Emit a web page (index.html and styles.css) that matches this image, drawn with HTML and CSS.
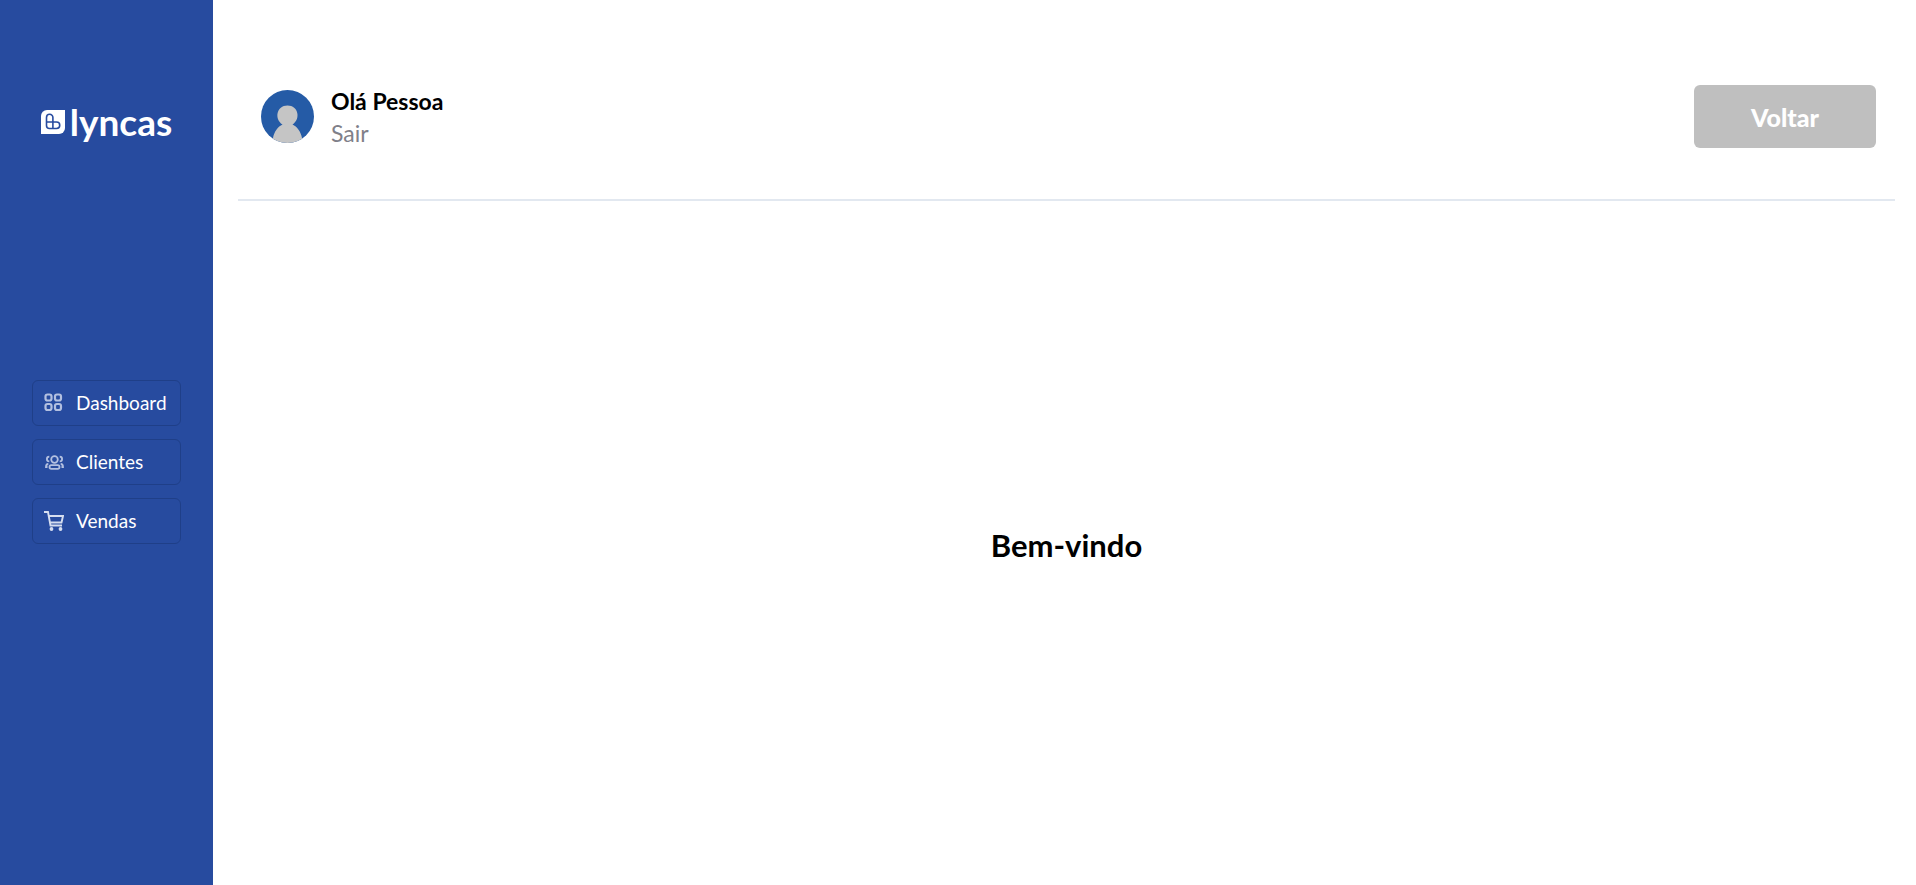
FILE: index.html
```html
<!DOCTYPE html>
<html lang="pt-BR">
<head>
<meta charset="utf-8">
<meta name="viewport" content="width=device-width, initial-scale=1">
<title>Lyncas</title>
<link rel="stylesheet" href="styles.css">
</head>
<body>
<div class="app">
  <aside class="sidebar">
    <div class="logo">
      <svg class="logo-mark" viewBox="0 0 24 24" aria-hidden="true">
        <path fill="#fff" d="M6 0H24V18a6 6 0 0 1-6 6H0V6a6 6 0 0 1 6-6Z"/>
        <path fill="none" stroke="#274b9f" stroke-width="1.600" d="M5.500 12V7.500a3.200 3.200 0 0 1 6.400 0V18.500H8.500a3 3 0 0 1-3-3V12H15.500a3.200 3.200 0 0 1 0 6.500H11.500"/>
      </svg>
      <span class="logo-name">lyncas</span>
    </div>
    <nav class="menu">
      <a class="menu-item" href="#dashboard">
        <svg class="menu-icon" viewBox="0 0 20 20" aria-hidden="true" fill="none" stroke="#b3c0e0" stroke-width="2.200">
          <rect x="1.500" y="1.500" width="6" height="6" rx="2"/><rect x="11" y="1.500" width="6" height="6" rx="2"/>
          <rect x="1.500" y="11" width="6" height="6" rx="2"/><rect x="11" y="11" width="6" height="6" rx="2"/>
        </svg>
        <span>Dashboard</span>
      </a>
      <a class="menu-item" href="#clientes">
        <svg class="menu-icon" viewBox="0 0 20 20" aria-hidden="true" fill="none" stroke="#b3c0e0" stroke-width="1.800">
          <circle cx="10.500" cy="7.500" r="3.300"/>
          <rect x="5.500" y="13.200" width="10" height="3.600" rx="1.800"/>
          <path d="M5.300 4.600a2.300 2.300 0 0 0 0 4.800M15.700 4.600a2.300 2.300 0 0 1 0 4.800M4.300 12C2.800 12 2 13 2 15H3.500M16.700 12C18.200 12 19 13 19 15H17.500"/>
        </svg>
        <span>Clientes</span>
      </a>
      <a class="menu-item" href="#vendas">
        <svg class="menu-icon" viewBox="0 0 20 20" aria-hidden="true" fill="none" stroke="#d6def0" stroke-width="1.900">
          <path d="M0 1H4L6.500 14.500H18M5 5H19L17.500 11.500H6.500"/>
          <circle cx="7.500" cy="18" r="1.900" fill="#d6def0" stroke="none"/><circle cx="16.500" cy="18" r="1.900" fill="#d6def0" stroke="none"/>
        </svg>
        <span>Vendas</span>
      </a>
    </nav>
  </aside>
  <div class="page">
    <header class="topbar">
      <div class="user">
        <svg class="avatar" viewBox="0 0 53 53" aria-hidden="true">
          <defs><clipPath id="avatar-clip"><circle cx="26.500" cy="26.500" r="26.500"/></clipPath></defs>
          <g clip-path="url(#avatar-clip)">
            <rect width="53" height="53" fill="#255ba6"/>
            <path fill="#c5c5c5" d="M12 53V48C13 42 17 36.500 21.500 34.500C13 29 15.500 15.500 26.500 15.500S40 29 31.500 34.500C36 36.500 40 42 41 48V53Z"/>
          </g>
        </svg>
        <div class="user-text">
          <strong class="user-name">Olá Pessoa</strong>
          <a class="logout" href="#sair">Sair</a>
        </div>
      </div>
      <button class="back" type="button">Voltar</button>
    </header>
    <main class="content">
      <h1 class="welcome">Bem-vindo</h1>
    </main>
  </div>
</div>
</body>
</html>
```
FILE: styles.css
```css
* {
  box-sizing: border-box;
}

body {
  margin: 0;
  font-family: Lato, "Open Sans", sans-serif;
  color: #000;
  background: #fff;
}

a {
  text-decoration: none;
}

.app {
  display: flex;
  min-height: 100vh;
}

.sidebar {
  flex: 0 0 213px;
  padding: 100px 32px 32px;
  background: #274b9f;
}

.logo {
  display: flex;
  align-items: center;
  justify-content: center;
  gap: 5px;
  height: 44px;
  color: #fff;
}

.logo-mark {
  flex: none;
  width: 24px;
  height: 24px;
}

.logo-name {
  font-size: 37px;
  font-weight: 700;
  line-height: 42px;
}

.menu {
  display: grid;
  gap: 13px;
  margin-top: 236px;
}

.menu-item {
  display: flex;
  align-items: center;
  gap: 12px;
  height: 46px;
  padding: 0 11px;
  border: 1px solid #1f3f88;
  border-radius: 6px;
  color: #fff;
  font-size: 19px;
  line-height: 24px;
}

.menu-icon {
  flex: none;
  width: 20px;
  height: 20px;
}

.page {
  flex: 1;
  display: flex;
  flex-direction: column;
  padding: 0 21px 0 25px;
}

.topbar {
  display: flex;
  align-items: flex-start;
  justify-content: space-between;
  padding: 85px 19px 51px 23px;
  border-bottom: 2px solid #e2e8f0;
}

.user {
  display: flex;
  align-items: center;
  gap: 17px;
  height: 63px;
}

.avatar {
  width: 53px;
  height: 53px;
}

.user-text {
  display: flex;
  flex-direction: column;
}

.user-name {
  font-size: 23px;
  font-weight: 700;
  line-height: 32px;
}

.logout {
  color: #808089;
  font-size: 23px;
  line-height: 32px;
}

.back {
  width: 182px;
  height: 63px;
  border: 0;
  border-radius: 6px;
  background: #bfbfbf;
  color: #fff;
  font-family: inherit;
  font-size: 25px;
  font-weight: 900;
}

.content {
  flex: 1;
  display: flex;
  align-items: center;
  justify-content: center;
  padding-top: 4px;
}

.welcome {
  margin: 0;
  font-size: 31px;
  font-weight: 700;
  line-height: 48px;
}
```
